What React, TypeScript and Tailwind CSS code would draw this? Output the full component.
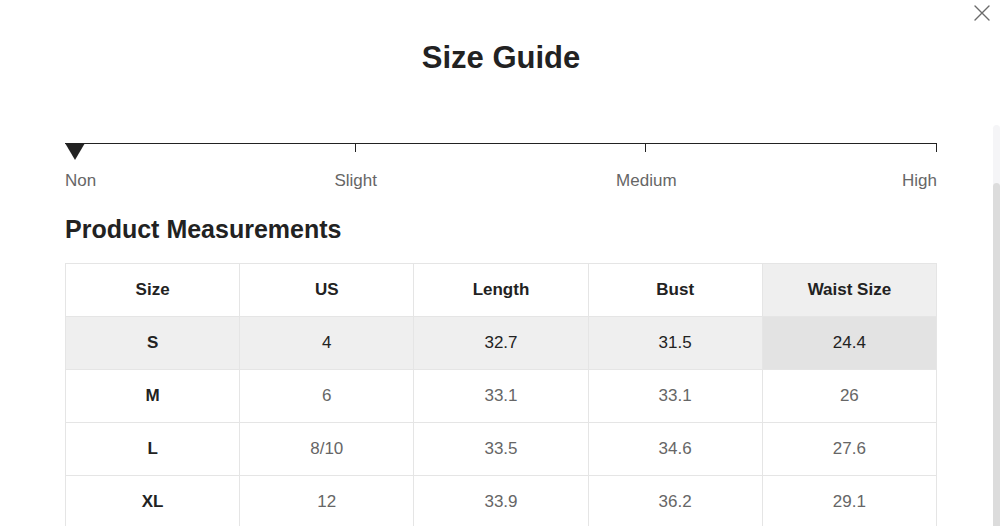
import React from 'react'

const columns = ['Size', 'US', 'Length', 'Bust', 'Waist Size']

const rows = [
  ['S', '4', '32.7', '31.5', '24.4'],
  ['M', '6', '33.1', '33.1', '26'],
  ['L', '8/10', '33.5', '34.6', '27.6'],
  ['XL', '12', '33.9', '36.2', '29.1']
]

// highlighted row + column (the selected size / measurement)
const activeRow = 0
const activeCol = 4

function CloseIcon() {
  return (
    <svg width="16" height="16" viewBox="0 0 16 16" fill="none">
      <path d="M1 1L15 15M15 1L1 15" stroke="#6b6b6b" strokeWidth="1.4" strokeLinecap="round" />
    </svg>
  )
}

function StretchScale() {
  return (
    <div>
      <div className="relative">
        <div className="grid grid-cols-3 border-t border-[#222]">
          <div className="h-[8px] border-r border-[#222]" />
          <div className="h-[8px] border-r border-[#222]" />
          <div className="h-[8px] border-r border-[#222]" />
        </div>
        {/* marker */}
        <svg className="absolute left-0 top-0" width="20" height="17" viewBox="0 0 20 17">
          <path d="M0 0H20L10 17Z" fill="#222" />
        </svg>
      </div>
      <div className="mt-[17px] grid grid-cols-6 text-[17px] leading-[24px] text-[#666]">
        <div className="text-left">Non</div>
        <div className="col-span-2 text-center">Slight</div>
        <div className="col-span-2 text-center">Medium</div>
        <div className="text-right">High</div>
      </div>
    </div>
  )
}

export default function App() {
  return (
    <div
      className="relative w-[1000px] h-[526px] overflow-hidden bg-white"
      style={{ fontFamily: '"Liberation Sans", Arial, sans-serif' }}
    >
      <button className="absolute right-[10px] top-[5px]">
        <CloseIcon />
      </button>

      <div className="ml-[65px] w-[872px] pt-[40px]">
        <h1 className="text-center text-[31px] leading-[36px] font-bold text-[#222]">Size Guide</h1>

        <div className="mt-[67px]">
          <StretchScale />
        </div>

        <h2 className="mt-[21px] text-[25px] leading-[30px] font-bold text-[#222]">
          Product Measurements
        </h2>

        <table className="mt-[19px] w-full table-fixed border-collapse text-[17px]">
          <thead>
            <tr className="h-[53px]">
              {columns.map((c, i) => (
                <th
                  key={c}
                  className={`border border-[#e5e5e5] font-bold text-[#222] ${
                    i === activeCol ? 'bg-[#efefef]' : 'bg-white'
                  }`}
                >
                  {c}
                </th>
              ))}
            </tr>
          </thead>
          <tbody>
            {rows.map((r, ri) => (
              <tr key={r[0]} className={`h-[53px] ${ri === activeRow ? 'bg-[#efefef]' : 'bg-white'}`}>
                {r.map((v, ci) => (
                  <td
                    key={ci}
                    className={`border border-[#e5e5e5] text-center ${
                      ci === 0 ? 'font-bold text-[#222]' : ri === activeRow ? 'text-[#222]' : 'text-[#666]'
                    } ${ri === activeRow && ci === activeCol ? 'bg-[#e3e3e3]' : ''}`}
                  >
                    {v}
                  </td>
                ))}
              </tr>
            ))}
          </tbody>
        </table>
      </div>

      {/* overlay scrollbar */}
      <div className="absolute right-0 top-[125px] bottom-0 w-[7px] rounded-t-full bg-[#f5f5f7]">
        <div className="mt-[58px] h-[400px] rounded-full bg-[#dcdcdc]" />
      </div>
    </div>
  )
}
